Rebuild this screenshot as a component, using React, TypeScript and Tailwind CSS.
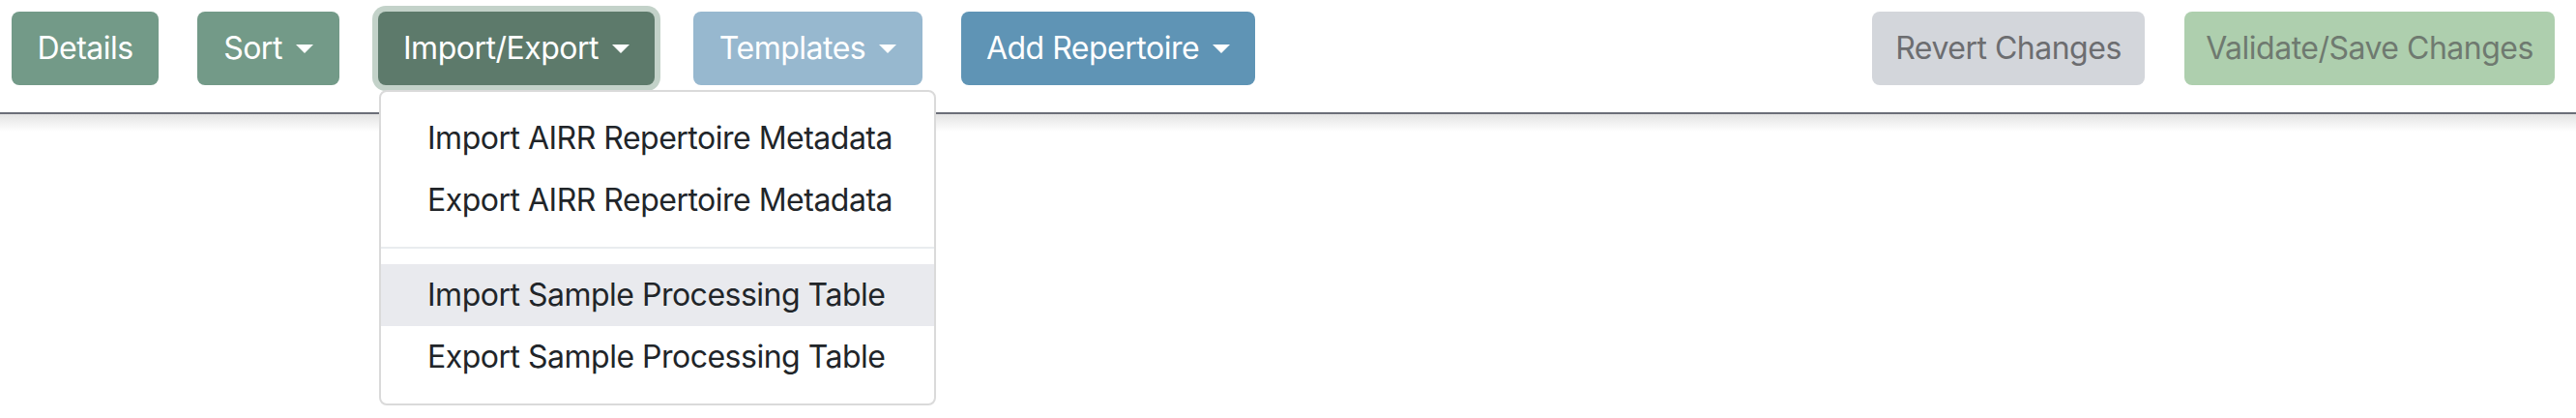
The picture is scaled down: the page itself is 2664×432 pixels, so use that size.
import React from 'react'

const font = "font-['Inter','Noto_Sans','Liberation_Sans',sans-serif]"

function Caret({ color = 'border-t-white' }: { color?: string }) {
  return (
    <span
      className={`ml-[14px] inline-block h-0 w-0 border-x-[9px] border-t-[9px] border-x-transparent ${color}`}
    />
  )
}

function Btn({
  label,
  caret,
  className,
}: {
  label: string
  caret?: boolean
  className: string
}) {
  return (
    <button
      type="button"
      className={`flex h-[76px] shrink-0 items-center justify-center whitespace-nowrap rounded-[8px] text-[32px] leading-[48px] tracking-[-0.5px] ${className}`}
    >
      <span>{label}</span>
      {caret && <Caret />}
    </button>
  )
}

const items = [
  ['Import AIRR Repertoire Metadata', 'Export AIRR Repertoire Metadata'],
  ['Import Sample Processing Table', 'Export Sample Processing Table'],
]

export default function App() {
  return (
    <div className={`relative h-[432px] w-[2664px] overflow-hidden bg-white ${font}`}>
      <div className="flex items-start border-b-2 border-[#6b6e78] pb-[28px] pl-[12px] pr-[22px] pt-[12px]">
        <div className="flex gap-[40px]">
          <Btn label="Details" className="w-[152px] bg-[#739a88] text-white" />
          <Btn label="Sort" caret className="w-[147px] bg-[#739a88] text-white" />

          <div className="relative">
            <Btn
              label="Import/Export"
              caret
              className="w-[286px] bg-[#5d7a6b] text-white shadow-[0_0_0_6px_#c3d2c9]"
            />
            <div className="absolute left-[1px] top-[81px] z-10 w-[576px] rounded-[8px] border-2 border-[#dadada] bg-white py-[16px] text-[32px] leading-[48px] tracking-[-0.5px] text-[#212529]">
              {items.map((group, gi) => (
                <div key={gi}>
                  {gi > 0 && <div className="my-[16px] h-[2px] bg-[#e9ecef]" />}
                  {group.map((label, i) => (
                    <div
                      key={label}
                      className={`flex h-[64px] items-center whitespace-nowrap px-[48px] ${
                        gi === 1 && i === 0 ? 'bg-[#e9eaee]' : ''
                      }`}
                    >
                      {label}
                    </div>
                  ))}
                </div>
              ))}
            </div>
          </div>

          <Btn label="Templates" caret className="w-[237px] bg-[#97b8cf] text-white" />
          <Btn label="Add Repertoire" caret className="w-[304px] bg-[#5f94b5] text-white" />
        </div>

        <div className="ml-auto flex gap-[41px]">
          <Btn label="Revert Changes" className="w-[282px] bg-[#d3d6db] text-[#6c6d70]" />
          <Btn label="Validate/Save Changes" className="w-[383px] bg-[#aecfae] text-[#6f7a70]" />
        </div>
      </div>
      <div className="h-[18px] bg-gradient-to-b from-[#e3e3e3] to-white" />
    </div>
  )
}
